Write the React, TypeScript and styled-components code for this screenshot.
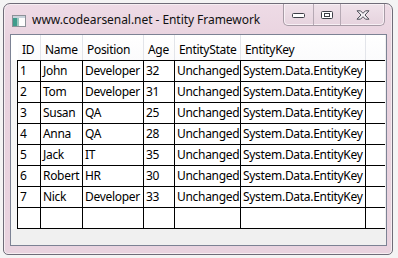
import React from 'react';
import styled, {createGlobalStyle} from "styled-components";

type Person = {id: number; name: string; position: string; age: number};

const people: Person[] = [
    {id: 1, name: "John", position: "Developer", age: 32},
    {id: 2, name: "Tom", position: "Developer", age: 31},
    {id: 3, name: "Susan", position: "QA", age: 25},
    {id: 4, name: "Anna", position: "QA", age: 28},
    {id: 5, name: "Jack", position: "IT", age: 35},
    {id: 6, name: "Robert", position: "HR", age: 30},
    {id: 7, name: "Nick", position: "Developer", age: 33},
]

const columns = [
    {title: "ID", width: 23},
    {title: "Name", width: 42},
    {title: "Position", width: 61},
    {title: "Age", width: 31},
    {title: "EntityState", width: 66},
    {title: "EntityKey", width: 125},
    {title: "", width: 20},
]

const GlobalStyle = createGlobalStyle`
    html, body {
        margin: 0;
        padding: 0;
        background: #f4f4f4;
    }
    body {
        font-family: "Segoe UI", "Noto Sans", "Open Sans", sans-serif;
        font-size: 12px;
        color: #000;
    }
`

const WindowIcon = () => (
    <svg width="14" height="12" viewBox="0 0 14 12">
        <rect x="0.5" y="0.5" width="13" height="11" fill="#fdfdfd" stroke="#8d9198"/>
        <rect x="1" y="1" width="12" height="2" fill="#c9d3dc"/>
        <rect x="1" y="3" width="4" height="8" fill="#3f9c8c"/>
        <rect x="5" y="3" width="2" height="8" fill="#9bc7bf"/>
    </svg>
)

const MinIcon = () => (
    <svg width="13" height="5" viewBox="0 0 13 5">
        <rect x="0.5" y="0.5" width="12" height="4" rx="1" fill="#fff" stroke="#3d3f47"/>
    </svg>
)

const MaxIcon = () => (
    <svg width="12" height="8" viewBox="0 0 12 8">
        <rect x="0.5" y="0.5" width="11" height="7" rx="1" fill="#fff" stroke="#3d3f47"/>
        <rect x="3.5" y="2.5" width="5" height="3" fill="#fff" stroke="#3d3f47"/>
    </svg>
)

const CloseIcon = () => (
    <svg width="14" height="10" viewBox="0 0 14 10">
        <path d="M1 0.8 H4.5 L7 3.3 L9.5 0.8 H13 L9 5 L13 9.2 H9.5 L7 6.7 L4.5 9.2 H1 L5 5 Z"
              fill="#f4f1f5" stroke="#4a4b55" strokeWidth="1" strokeLinejoin="round"/>
    </svg>
)

export default function App() {
    return (
        <>
            <GlobalStyle/>
            <Window>
                <TitleBar>
                    <IconSlot><WindowIcon/></IconSlot>
                    <Title>www.codearsenal.net - Entity Framework</Title>
                    <Caption>
                        <CaptionButton width={29}><MinIcon/></CaptionButton>
                        <CaptionButton width={26}><MaxIcon/></CaptionButton>
                        <CaptionButton width={43}><CloseIcon/></CaptionButton>
                    </Caption>
                </TitleBar>
                <Client>
                    <Grid>
                        <HeaderRow>
                            <Corner/>
                            {columns.map((col, index) => (
                                <HeaderCell key={index} width={col.width}>{col.title}</HeaderCell>
                            ))}
                        </HeaderRow>
                        <Body>
                            {people.map(p => (
                                <Row key={p.id}>
                                    <RowHeader/>
                                    <Cell width={23}>{p.id}</Cell>
                                    <Cell width={42}>{p.name}</Cell>
                                    <Cell width={61}>{p.position}</Cell>
                                    <Cell width={31}>{p.age}</Cell>
                                    <Cell width={66}>Unchanged</Cell>
                                    <Cell width={125}>System.Data.EntityKey</Cell>
                                    <Cell width={20}/>
                                </Row>
                            ))}
                            <Row>
                                <RowHeader/>
                                {columns.map((col, index) => (
                                    <Cell key={index} width={col.width}/>
                                ))}
                            </Row>
                        </Body>
                    </Grid>
                </Client>
            </Window>
        </>
    );
}

const Window = styled.div`
    margin: 3px 5px 3px 3px;
    height: 252px;
    box-sizing: border-box;
    border: 1px solid #6f6c78;
    border-radius: 7px 7px 5px 5px;
    background: linear-gradient(#eedbe6, #e8d2de 40px, #e9d3df);
    padding: 0 5px 8px 6px;
    display: flex;
    flex-direction: column;
    box-shadow: inset 0 0 0 1px #f6eef2;
`

const TitleBar = styled.div`
    height: 30px;
    display: flex;
    align-items: flex-start;
`

const IconSlot = styled.div`
    margin: 11px 0 0 2px;
    width: 14px;
    height: 12px;
    display: flex;
`

const Title = styled.div`
    margin: 8px 0 0 6px;
    line-height: 16px;
    font-size: 12px;
    letter-spacing: -0.05px;
    color: #111;
    flex: 1;
`

const Caption = styled.div`
    display: flex;
    height: 21px;
    margin-right: 2px;
    border: 1px solid #a79ba6;
    border-top: none;
    border-radius: 0 0 5px 5px;
    background: linear-gradient(#efe2ea, #e6d3de);
    box-shadow: inset 0 0 0 1px #f8f0f5;
    overflow: hidden;
`

const CaptionButton = styled.div<{ width: number }>`
    width: ${p => p.width}px;
    display: flex;
    align-items: center;
    justify-content: center;
    padding-top: 1px;
    & + & {
        border-left: 1px solid #b6a9b4;
    }
`

const Client = styled.div`
    flex: 1;
    border: 1px solid #7c8294;
    background: #f0f0f0;
    overflow: hidden;
`

const Grid = styled.div`
    display: flex;
    flex-direction: column;
    font-size: 12px;
    letter-spacing: -0.3px;
`

const HeaderRow = styled.div`
    display: flex;
    height: 25px;
`

const Corner = styled.div`
    width: 6px;
    background: #fff;
`

const HeaderCell = styled.div<{ width: number }>`
    width: ${p => p.width}px;
    box-sizing: border-box;
    border-left: 1px solid #e3e5ea;
    background: linear-gradient(#ffffff, #fbfbfc);
    padding: 7px 0 0 4px;
    line-height: 16px;
    white-space: nowrap;
    overflow: hidden;
    &:nth-child(2) {
        border-left-color: #fff;
    }
`

const Body = styled.div`
    display: flex;
    flex-direction: column;
    background: #f0f0f0;
`

const Row = styled.div`
    display: flex;
    height: 21px;
    &:first-child > div:not(:first-child) {
        height: 22px;
        border-top: 1px solid #000;
    }
    &:first-child {
        height: 22px;
    }
`

const RowHeader = styled.div`
    width: 6px;
    background: #f7f7f7;
`

const Cell = styled.div<{ width: number }>`
    width: ${p => p.width}px;
    box-sizing: border-box;
    border-left: 1px solid #000;
    border-bottom: 1px solid #000;
    background: #fff;
    padding: 1px 0 0 2px;
    line-height: 18px;
    white-space: nowrap;
    overflow: hidden;
`
